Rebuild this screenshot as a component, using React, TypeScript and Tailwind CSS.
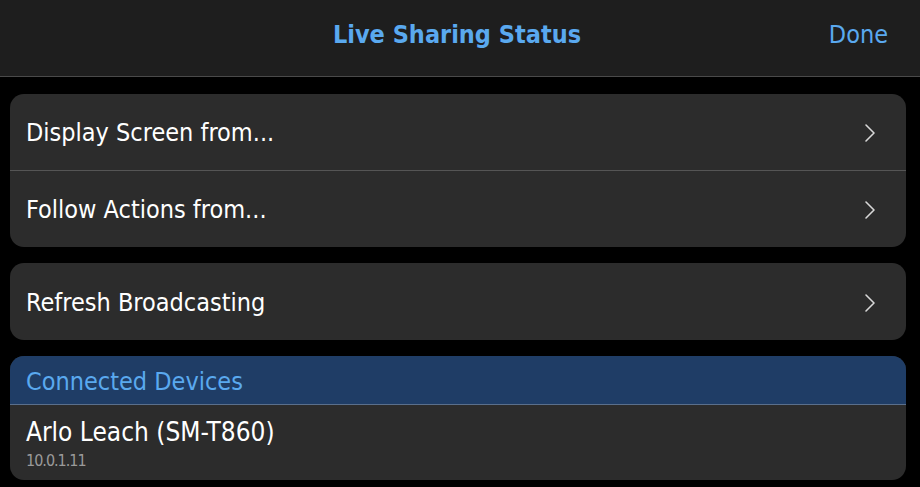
import React from "react";

const font = { fontFamily: '"DejaVu Sans Condensed", "DejaVu Sans", sans-serif' };

function Chevron() {
  return (
    <svg width="12" height="20" viewBox="0 0 12 20" fill="none" className="shrink-0">
      <path d="M2 2 L10 10 L2 18" stroke="#d8d8d8" strokeWidth="1.6" strokeLinecap="round" strokeLinejoin="round" />
    </svg>
  );
}

function Row({ label, divider, h = "h-[76px]" }: { label: string; divider?: boolean; h?: string }) {
  return (
    <div className={`flex ${h} items-center justify-between pl-[16px] pr-[30px] pt-[2px] ${divider ? "border-t border-[#555555]" : ""}`}>
      <span className="text-[25px] text-white">{label}</span>
      <Chevron />
    </div>
  );
}

export default function App() {
  return (
    <div className="h-[487px] w-[920px] overflow-hidden bg-black" style={font}>
      <div className="relative flex h-[77px] items-start justify-center border-b border-[#4a4a4a] bg-[#1e1e1e] pr-[6px] pt-[16px]">
        <span className="text-[25px] font-bold text-[#5aa9ef]">Live Sharing Status</span>
        <span className="absolute right-[32px] top-[16px] text-[25px] text-[#5aa9ef]">Done</span>
      </div>
      <div className="flex flex-col gap-[16px] pl-[10px] pr-[14px] pt-[17px]">
        <div className="overflow-hidden rounded-[14px] bg-[#2c2c2c]">
          <Row label="Display Screen from..." />
          <Row label="Follow Actions from..." divider h="h-[77px]" />
        </div>
        <div className="overflow-hidden rounded-[14px] bg-[#2c2c2c]">
          <Row label="Refresh Broadcasting" h="h-[77px]" />
        </div>
        <div className="overflow-hidden rounded-[14px] bg-[#2c2c2c]">
          <div className="flex h-[49px] items-center border-b border-[#5a6f8c] bg-[#1f3d66] pl-[16px] pt-[4px]">
            <span className="text-[25px] text-[#5aa9ef]">Connected Devices</span>
          </div>
          <div className="flex h-[75px] flex-col justify-center pl-[16px] pt-[4px]">
            <span className="text-[26px] leading-[32px] text-white">Arlo Leach (SM-T860)</span>
            <span className="text-[16px] leading-[26px] tracking-[-1px] text-[#9a9a9a]">10.0.1.11</span>
          </div>
        </div>
      </div>
    </div>
  );
}
